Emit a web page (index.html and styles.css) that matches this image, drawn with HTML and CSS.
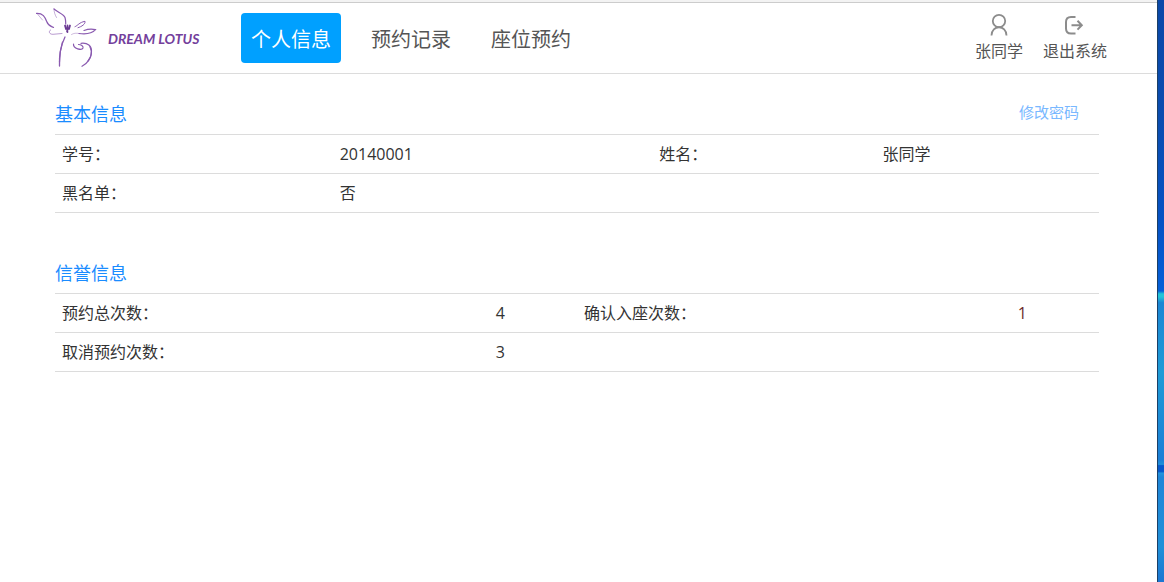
FILE: index.html
```
<!DOCTYPE html>
<html lang="zh-CN">

<head>
  <meta charset="UTF-8" />
  <meta name="viewport" content="width=device-width, initial-scale=1.0" />
  <title>个人信息</title>
  <link rel="stylesheet" href="styles.css">
</head>

<body>
  <div class="window">
    <!-- 头部导航 -->
    <header class="header">
      <a class="logo" href="#" aria-label="Dream Lotus">
        <svg class="logo-flower" width="64" height="60" viewBox="0 0 64 60" fill="none" stroke="#8a5ab0" stroke-linecap="round">
          <path d="M0.500 5.300C7 5 9 9 10.700 13.500S14 18 17.500 19.500" stroke-width="1.200" />
          <path d="M1 5.500L6.500 12" stroke-width=".8" opacity=".6" />
          <path d="M18 1C22 4.500 27.500 6 29 9.500C29.800 12 29.700 13 29.700 16" stroke-width="1.200" />
          <path d="M18 1C18 4 19 7 20.500 9.500" stroke-width=".8" opacity=".6" />
          <path d="M39 18.700C42 17.500 43 14.500 49 13.300C49.500 16 46 18.500 42 19.700" stroke-width="1" />
          <path d="M48 22.500C52 21 55 20.500 59.500 21.700C56 25.500 50 26.500 43 25.500" stroke-width="1.200" />
          <path d="M43 25.500C40 25 38 25 35.500 26.500" stroke-width=".8" opacity=".5" />
          <path d="M14.500 22C12 23.500 13.500 26.500 17 26.300L26 25.500" stroke-width="1" opacity=".6" />
          <path d="M29 29C25.500 36 23 46 23.500 58" stroke-width="1.300" />
          <path d="M26.500 34C24 42 23.500 48 23.500 54" stroke-width="1.200" />
          <path d="M37.500 36C37 41 46 42.500 47 40C47.500 38 45 36.500 42.500 36.500" stroke-width="1.200" />
          <path d="M45 35.300C52 34.500 55.500 38 55.500 43C55.500 50 51 56 46 58.300" stroke-width="1.200" />
          <path d="M54 39C56.500 44 55.500 49 52 53" stroke-width="1.200" />
          <path d="M29 17.500L30 21M31.500 17.500V22M34 17.500L33 21M31 23L31.500 24" stroke="#6a3a92" stroke-width="1.800" />
        </svg>
        <span class="logo-name">DREAM LOTUS</span>
      </a>
      <nav class="nav">
        <a class="active" href="#">个人信息</a>
        <a href="#">预约记录</a>
        <a href="#">座位预约</a>
      </nav>
      <div class="user">
        <a href="#">
          <svg width="22" height="24" viewBox="0 0 22 24" fill="none" stroke="#8c8c8c" stroke-width="1.800">
            <circle cx="11" cy="8" r="6.200" />
            <path d="M3.500 22.500C3.500 11.500 18.500 11.500 18.500 22.500" />
          </svg>
          <span>张同学</span>
        </a>
        <a href="#">
          <svg width="22" height="24" viewBox="0 0 22 24" fill="none" stroke="#8c8c8c" stroke-width="2">
            <path d="M11.500 4H7C4 4 2 6 2 9V15.500C2 18.500 4 20.500 7 20.500H11.500" />
            <path d="M7.500 12.200H17.500M13.500 7.800L17.800 12.200L13.500 16.600" />
          </svg>
          <span>退出系统</span>
        </a>
      </div>
    </header>

    <main class="main">
      <!-- 基本信息 -->
      <section class="panel">
        <div class="panel-title">
          <h2>基本信息</h2>
          <a href="#">修改密码</a>
        </div>
        <table class="info basic">
          <tr>
            <th scope="row">学号：</th>
            <td>20140001</td>
            <th scope="row">姓名：</th>
            <td>张同学</td>
          </tr>
          <tr>
            <th scope="row">黑名单：</th>
            <td>否</td>
            <td></td>
            <td></td>
          </tr>
        </table>
      </section>

      <!-- 信誉信息 -->
      <section class="panel">
        <div class="panel-title">
          <h2>信誉信息</h2>
        </div>
        <table class="info credit">
          <tr>
            <th scope="row">预约总次数：</th>
            <td>4</td>
            <th scope="row">确认入座次数：</th>
            <td class="confirmed">1</td>
          </tr>
          <tr>
            <th scope="row">取消预约次数：</th>
            <td>3</td>
            <td></td>
            <td></td>
          </tr>
        </table>
      </section>
    </main>
  </div>
  <div class="desktop"></div>
</body>

</html>
```

FILE: styles.css
```
* {
  box-sizing: border-box;
}

body {
  display: flex;
  min-height: 100vh;
  margin: 0;
  font-family: "Open Sans", "Noto Sans CJK SC", sans-serif;
  font-size: 16px;
  color: #333;
  background: #fff;
}

a {
  text-decoration: none;
}

.window {
  flex: 1;
  border-top: 2px solid #f3f3f3;
}

/* 窗口右侧露出的桌面 */
.desktop {
  width: 7px;
  border-left: 1px solid #1c3f66;
  background: linear-gradient(#0a48a8 0, #0a4db0 20%, #0552c4 38%, #0560d8 50%, #22c4d8 50.500%, #22c4d8 51%, #1b86d4 52%, #1f9bd6 64%, #1b7fd6 79%, #2090d8 79.800%, #0758cc 80%, #0758cc 81%, #2494dc 81.300%, #1f86d8 82%, #2090d8 94%, #1b76d2 100%);
}

.header {
  display: flex;
  align-items: center;
  height: 72px;
  padding: 0 50px 0 36px;
  border-top: 1px solid #ccc;
  border-bottom: 1px solid #dcdcdc;
}

.logo {
  display: flex;
  align-items: center;
  gap: 8px;
  width: 205px;
}

.logo-name {
  font-family: Lato, "Liberation Sans", sans-serif;
  font-size: 14px;
  font-style: italic;
  font-weight: 700;
  color: #74409c;
  white-space: nowrap;
}

.nav {
  display: flex;
  gap: 20px;
}

.nav a {
  padding: 3px 10px 0;
  border-radius: 4px;
  font-size: 20px;
  line-height: 47px;
  color: #555;
}

.nav a.active {
  color: #fff;
  background: #00a0ff;
}

.user {
  display: flex;
  gap: 20px;
  margin-left: auto;
}

.user a {
  display: flex;
  flex-direction: column;
  align-items: center;
  gap: 2px;
  line-height: 24px;
  color: #555;
}

.main {
  padding: 20px 58px 0 55px;
}

.panel {
  margin-bottom: 40px;
}

.panel-title {
  display: flex;
  justify-content: space-between;
  height: 40px;
  padding-right: 20px;
  line-height: 40px;
}

.panel-title h2 {
  margin: 0;
  font-size: 18px;
  font-weight: 400;
  color: #1a8cff;
}

.panel-title a {
  font-size: 15px;
  line-height: 36px;
  color: #79b8ff;
}

.info {
  width: 100%;
  table-layout: fixed;
  border-collapse: collapse;
  border-top: 1px solid #dcdcdc;
}

.info th,
.info td {
  height: 39px;
  padding: 0 7px;
  border-bottom: 1px solid #dcdcdc;
  font-weight: 400;
  line-height: 24px;
  text-align: left;
}

.basic th:nth-child(1) {
  width: 26.6%;
}

.basic td:nth-child(2) {
  width: 30.6%;
}

.basic th:nth-child(3) {
  width: 21.4%;
}

.credit th {
  width: 35.5%;
}

.info.credit td {
  padding: 0 8px 0 6px;
  text-align: center;
}

.credit td.confirmed {
  color: #6b2a2a;
}
```
